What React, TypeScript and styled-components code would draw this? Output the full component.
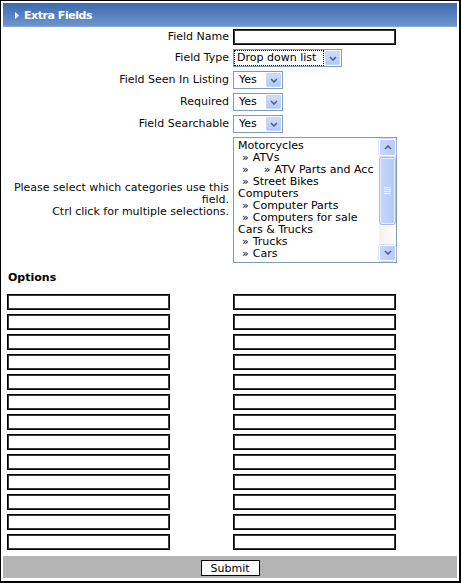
import React from "react";
import styled, { createGlobalStyle } from "styled-components";

const Global = createGlobalStyle`
  html, body { margin: 0; padding: 0; background: #fff; }
`;

const Page = styled.div`
  width: 461px;
  height: 583px;
  box-sizing: border-box;
  border-style: solid;
  border-color: #000;
  border-width: 1px 2px 2px 1px;
  padding: 2px;
  background: #fff;
  font-family: "DejaVu Sans", Verdana, sans-serif;
  font-size: 11px;
  color: #0a0a0a;
  display: flex;
  flex-direction: column;
`;

const Header = styled.div`
  height: 24px;
  box-sizing: border-box;
  background: linear-gradient(#3c6aae, #6b92cb 92%, #8aaada);
  display: flex;
  align-items: center;
  padding-left: 12px;
  gap: 5px;
  color: #fff;
  font-weight: bold;
  font-size: 11px;
  letter-spacing: -0.45px;
`;

const Form = styled.div`
  display: grid;
  grid-template-columns: 1fr 1fr;
`;

const Label = styled.div`
  text-align: right;
  padding: 0 1px 0 4px;
  align-self: center;
  line-height: 12px;
`;

const Control = styled.div<{ $pad?: number }>`
  padding: 2px 0 2px ${(p) => p.$pad ?? 3}px;
  display: flex;
  align-items: center;
`;

const TextInput = styled.div`
  width: 163px;
  height: 16px;
  box-sizing: border-box;
  border: 1px solid #000;
  box-shadow: inset 0 0 0 1px #3a3a3a;
  background: #fff;
`;

const SelectBox = styled.div<{ $w: number }>`
  width: ${(p) => p.$w}px;
  height: 18px;
  box-sizing: border-box;
  border: 1px solid #7f9db9;
  background: #fff;
  display: flex;
  align-items: center;
  padding: 1px;
`;

const SelectValue = styled.div<{ $focus?: boolean }>`
  flex: 1;
  height: 14px;
  line-height: 13px;
  box-sizing: border-box;
  padding-left: ${(p) => (p.$focus ? 2 : 4)}px;
  margin-right: 2px;
  outline: ${(p) => (p.$focus ? "1px dotted #000" : "none")};
  outline-offset: 0;
  color: #000;
`;

const SelectButton = styled.div`
  width: 15px;
  height: 14px;
  box-sizing: border-box;
  border: 1px solid #c3d3fd;
  border-radius: 1px;
  background: linear-gradient(#d0dcfc, #b4c8f6);
  display: flex;
  align-items: center;
  justify-content: center;
`;

const Chevron = ({ up }: { up?: boolean }) => (
  <svg width="8" height="5" viewBox="0 0 8 5">
    <path
      d={up ? "M1 4 L4 1 L7 4" : "M1 1 L4 4 L7 1"}
      fill="none"
      stroke="#4d6185"
      strokeWidth="1.6"
    />
  </svg>
);

const Select = ({ w, value, focus }: { w: number; value: string; focus?: boolean }) => (
  <SelectBox $w={w}>
    <SelectValue $focus={focus}>{value}</SelectValue>
    <SelectButton>
      <Chevron />
    </SelectButton>
  </SelectBox>
);

const ListBox = styled.div`
  width: 164px;
  height: 126px;
  box-sizing: border-box;
  border: 1px solid #7f9db9;
  background: #fff;
  display: flex;
`;

const ListItems = styled.div`
  flex: 1;
  padding: 2px 0 0 4px;
  line-height: 12px;
  overflow: hidden;
  white-space: nowrap;
  color: #000;
`;

const Item = styled.div<{ $indent: number }>`
  padding-left: ${(p) => p.$indent}px;
`;

const Mark = styled.span<{ $gap: number }>`
  margin-right: ${(p) => p.$gap}px;
`;

const Scrollbar = styled.div`
  width: 17px;
  display: flex;
  flex-direction: column;
  background: linear-gradient(90deg, #f3f1ec, #fefefb);
  padding: 1px 0;
  box-sizing: border-box;
`;

const ScrollButton = styled.div`
  height: 17px;
  box-sizing: border-box;
  border: 1px solid #fff;
  border-radius: 2px;
  background: linear-gradient(90deg, #c8d6fc, #b9cbf6);
  box-shadow: 0 0 0 0.5px #b5c6ee;
  display: flex;
  align-items: center;
  justify-content: center;
`;

const Track = styled.div`
  flex: 1;
  padding: 1px 0 20px;
  display: flex;
  flex-direction: column;
`;

const Thumb = styled.div`
  height: 68px;
  box-sizing: border-box;
  border: 1px solid #a6b9e8;
  border-radius: 3px;
  background: linear-gradient(90deg, #c6d5fd, #b6c9f7);
  box-shadow: inset 0 0 0 1px #e6edff;
  display: flex;
  align-items: center;
  justify-content: center;
`;

const Grip = () => (
  <svg width="7" height="8" viewBox="0 0 7 8">
    {[0.5, 2.5, 4.5, 6.5].map((y) => (
      <line key={y} x1="0" y1={y} x2="7" y2={y} stroke="#eef3ff" strokeWidth="1" />
    ))}
  </svg>
);

const OptionsTitle = styled.div`
  grid-column: 1 / -1;
  height: 27px;
  box-sizing: border-box;
  padding: 6px 0 0 5px;
  font-weight: bold;
  color: #000;
`;

const Footer = styled.div`
  margin-top: 4px;
  height: 22px;
  box-sizing: border-box;
  background: #b4b4b4;
  display: flex;
  justify-content: center;
  padding-top: 4px;
`;

const SubmitButton = styled.button`
  width: 59px;
  height: 16px;
  box-sizing: border-box;
  border: 1px solid #000;
  background: #fff;
  font-family: "DejaVu Sans", Verdana, sans-serif;
  font-size: 11px;
  color: #000;
  padding: 0;
  line-height: 13px;
`;

const Triangle = () => (
  <svg width="4" height="7" viewBox="0 0 4 7">
    <path d="M0 0 L4 3.5 L0 7 Z" fill="#fff" />
  </svg>
);

const categories: { level: number; text: string }[] = [
  { level: 0, text: "Motorcycles" },
  { level: 1, text: "ATVs" },
  { level: 2, text: "ATV Parts and Acc" },
  { level: 1, text: "Street Bikes" },
  { level: 0, text: "Computers" },
  { level: 1, text: "Computer Parts" },
  { level: 1, text: "Computers for sale" },
  { level: 0, text: "Cars & Trucks" },
  { level: 1, text: "Trucks" },
  { level: 1, text: "Cars" },
];

export default function App() {
  return (
    <>
      <Global />
      <Page>
        <Header>
          <Triangle />
          <span>Extra Fields</span>
        </Header>
        <Form>
          <Label>Field Name</Label>
          <Control>
            <TextInput />
          </Control>

          <Label>Field Type</Label>
          <Control>
            <Select w={109} value="Drop down list" focus />
          </Control>

          <Label>Field Seen In Listing</Label>
          <Control>
            <Select w={50} value="Yes" />
          </Control>

          <Label>Required</Label>
          <Control>
            <Select w={50} value="Yes" />
          </Control>

          <Label>Field Searchable</Label>
          <Control>
            <Select w={50} value="Yes" />
          </Control>

          <Label>
            Please select which categories use this field.
            <br />
            Ctrl click for multiple selections.
          </Label>
          <Control>
            <ListBox>
              <ListItems>
                {categories.map((c, i) => (
                  <Item key={i} $indent={c.level === 0 ? 0 : 4}>
                    {c.level === 2 && <Mark $gap={15}>»</Mark>}
                    {c.level > 0 && <Mark $gap={4}>»</Mark>}
                    {c.text}
                  </Item>
                ))}
              </ListItems>
              <Scrollbar>
                <ScrollButton>
                  <Chevron up />
                </ScrollButton>
                <Track>
                  <Thumb>
                    <Grip />
                  </Thumb>
                </Track>
                <ScrollButton>
                  <Chevron />
                </ScrollButton>
              </Scrollbar>
            </ListBox>
          </Control>

          <OptionsTitle>Options</OptionsTitle>
          {Array.from({ length: 13 }).map((_, i) => (
            <React.Fragment key={i}>
              <Control $pad={4}>
                <TextInput />
              </Control>
              <Control>
                <TextInput />
              </Control>
            </React.Fragment>
          ))}
        </Form>
        <Footer>
          <SubmitButton>Submit</SubmitButton>
        </Footer>
      </Page>
    </>
  );
}
